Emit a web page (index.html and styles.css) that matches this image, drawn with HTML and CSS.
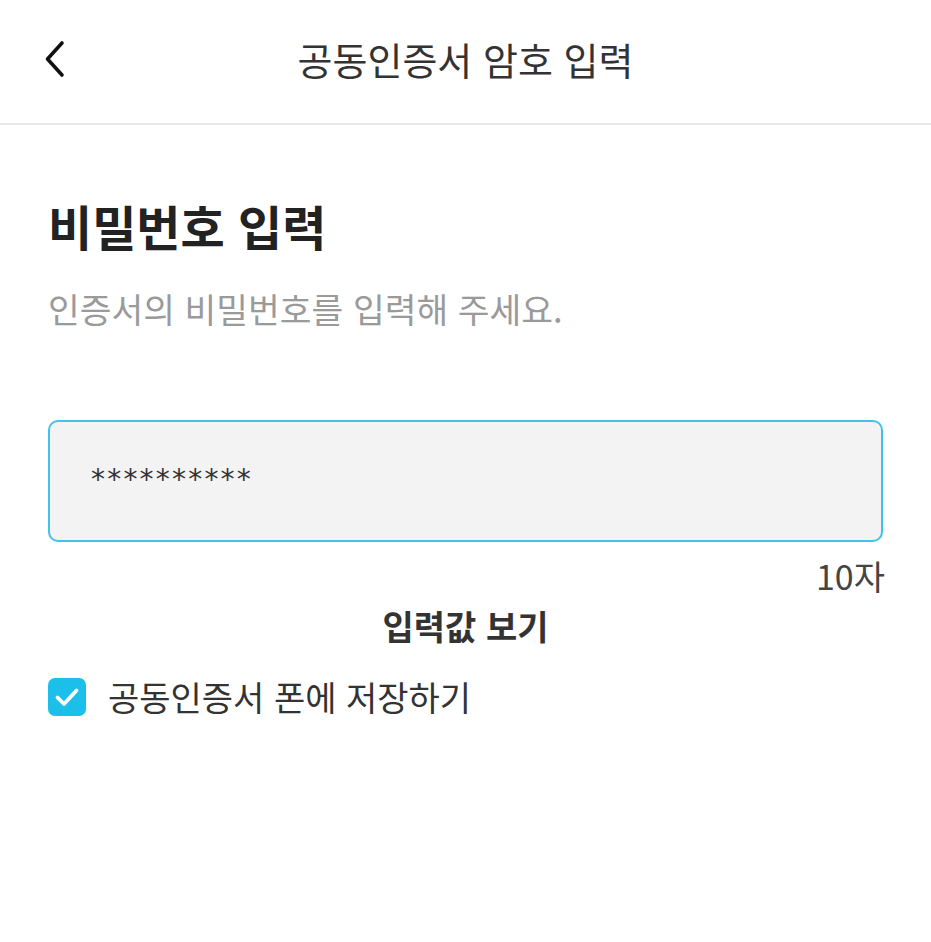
FILE: index.html
```html
<!DOCTYPE html>
<html lang="ko">
<head>
<meta charset="utf-8">
<link rel="stylesheet" href="styles.css">
</head>
<body>
<div class="page">
  <header class="topbar">
    <button class="back" aria-label="뒤로">
      <svg width="24" height="40" viewBox="0 0 24 40"><path d="M19 4 L4.5 20 L19 36" fill="none" stroke="#111" stroke-width="3.6" stroke-linecap="round" stroke-linejoin="round"/></svg>
    </button>
    <h1 class="topbar-title">공동인증서 암호 입력</h1>
  </header>
  <main class="content">
    <h2 class="heading">비밀번호 입력</h2>
    <p class="sub">인증서의 비밀번호를 입력해 주세요.</p>
    <div class="field">
      <span class="mask">**********</span>
    </div>
    <div class="count">10자</div>
    <div class="reveal">입력값 보기</div>
    <label class="check-row">
      <span class="checkbox">
        <svg width="38" height="38" viewBox="0 0 38 38"><path d="M9.5 19.5 L16 26 L28.5 12.5" fill="none" stroke="#fff" stroke-width="3.8" stroke-linecap="round" stroke-linejoin="round"/></svg>
      </span>
      <span class="check-label">공동인증서 폰에 저장하기</span>
    </label>
  </main>
</div>
</body>
</html>
```
FILE: styles.css
```css
* { box-sizing: border-box; }
html, body { margin: 0; padding: 0; background: #fff; }
body {
  font-family: "Noto Sans CJK KR", "Noto Sans", sans-serif;
  color: #333;
}
.page { width: 931px; height: 942px; overflow: hidden; }
.topbar {
  position: relative;
  height: 125px;
  border-bottom: 2px solid #e8e8e8;
  display: flex;
  align-items: center;
  justify-content: center;
}
.back {
  position: absolute;
  left: 40px;
  top: 39px;
  background: none;
  border: 0;
  padding: 0;
  width: 30px;
  height: 40px;
}
.topbar-title {
  margin: -6px 0 0;
  font-size: 38px;
  font-weight: 400;
  color: #333;
  line-height: 50px;
}
.content { padding: 0 48px; display: flex; flex-direction: column; }
.heading {
  margin: 68px 0 0;
  font-size: 48px;
  font-weight: 700;
  color: #222;
  line-height: 64px;
}
.sub {
  margin: 27px 0 0;
  font-size: 34.5px;
  color: #9a9a9a;
  line-height: 48px;
}
.field {
  margin-top: 88px;
  height: 122px;
  border: 2px solid #3ec3ea;
  border-radius: 10px;
  background: #f3f3f3;
  display: flex;
  align-items: center;
  padding-left: 41px;
  padding-bottom: 4px;
}
.mask {
  font-family: "DejaVu Sans", sans-serif;
  font-size: 28px;
  color: #333;
  letter-spacing: 2.2px;
}
.count {
  align-self: flex-end;
  margin-top: 12px;
  font-size: 34px;
  color: #444;
  line-height: 44px;
  margin-right: -2px;
}
.reveal {
  align-self: center;
  font-size: 34px;
  font-weight: 700;
  color: #333;
  line-height: 44px;
  margin-top: 6px;
}
.check-row {
  display: flex;
  align-items: center;
  gap: 22px;
  margin-top: 27px;
}
.checkbox {
  width: 38px;
  height: 38px;
  border-radius: 7px;
  background: #1cbfe9;
  display: flex;
}
.check-label {
  font-size: 34px;
  color: #333;
  line-height: 44px;
}
```
